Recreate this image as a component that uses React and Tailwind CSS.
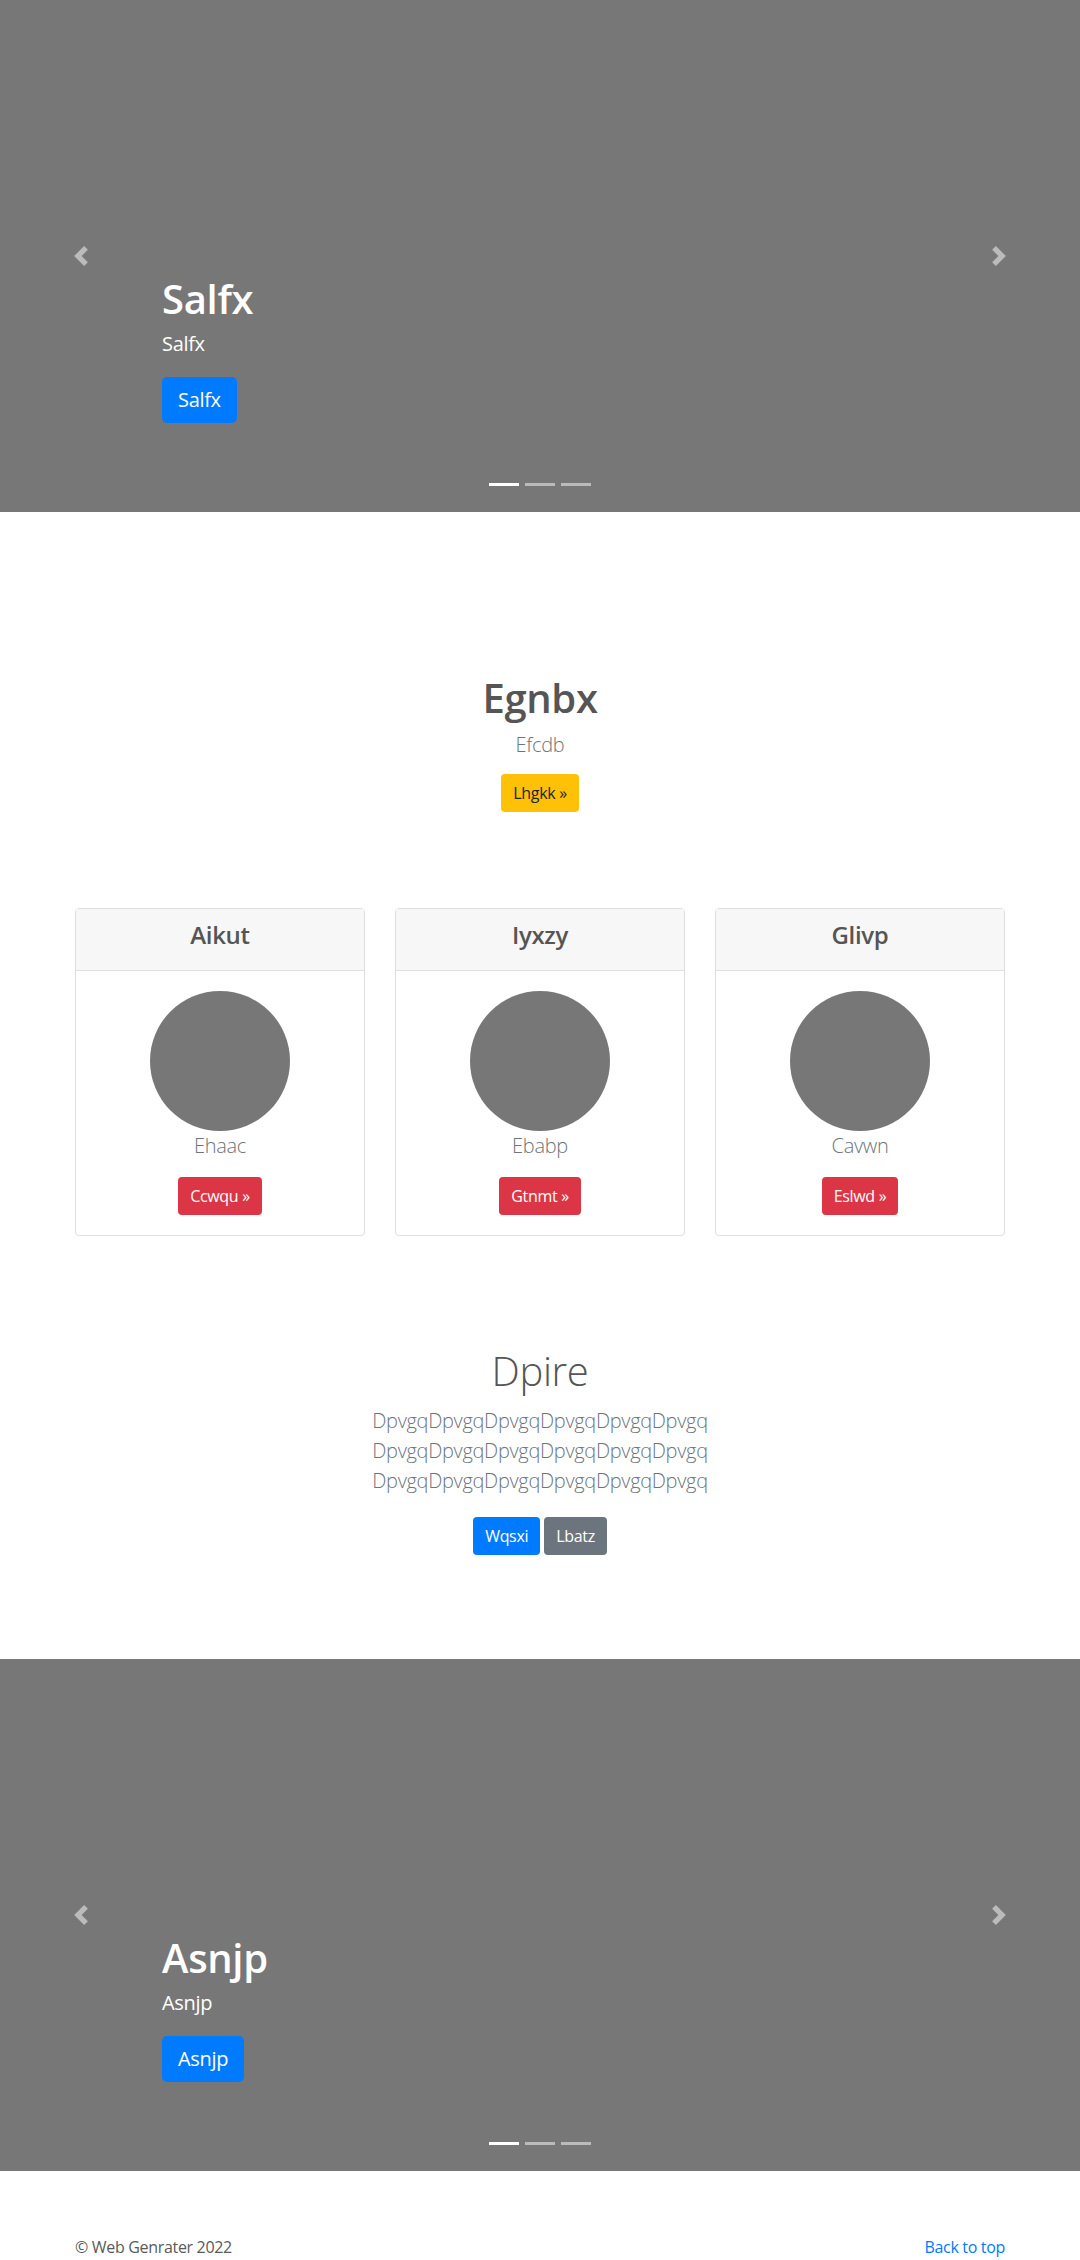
import React from 'react';

/* ── Carousel-like hero ───────────────────────────── */
function Chevron({ dir }) {
  const d = dir === 'prev'
    ? 'M5.25 0l-4 4 4 4 1.5-1.5L4.25 4l2.5-2.5L5.25 0z'
    : 'M2.75 0l-1.5 1.5L3.75 4l-2.5 2.5L2.75 8l4-4-4-4z';
  return (
    <svg viewBox="0 0 8 8" className="w-5 h-5" fill="#fff">
      <path d={d} />
    </svg>
  );
}

function Hero({ title }) {
  return (
    <div className="relative h-[512px] bg-[#777]">
      <a href="#" className="absolute left-0 top-0 bottom-0 w-[15%] flex items-center justify-center opacity-50">
        <Chevron dir="prev" />
      </a>
      <a href="#" className="absolute right-0 top-0 bottom-0 w-[15%] flex items-center justify-center opacity-50">
        <Chevron dir="next" />
      </a>

      <div className="absolute left-[15%] right-[15%] bottom-[53px] py-5 text-left text-white">
        <h1 className="text-[40px] leading-[1.2] font-semibold mb-1.5">{title}</h1>
        <p className="text-xl leading-[1.5] mb-[18px]">{title}</p>
        <p className="mb-4">
          <a href="#" className="inline-block bg-[#007bff] text-white text-xl leading-[1.5] px-4 py-2 rounded-[5px]">
            {title}
          </a>
        </p>
      </div>

      {/* indicators */}
      <div className="absolute bottom-[26px] left-0 right-0 flex justify-center gap-[6px]">
        <span className="w-[30px] h-[3px] bg-white" />
        <span className="w-[30px] h-[3px] bg-white/50" />
        <span className="w-[30px] h-[3px] bg-white/50" />
      </div>
    </div>
  );
}

/* ── Card ─────────────────────────────────────────── */
function Card({ title, text, btn }) {
  return (
    <div className="border border-[#dfdfdf] rounded-[4px] text-center bg-white">
      <div className="bg-[#f7f7f7] border-b border-[#dfdfdf] px-5 py-3">
        <h4 className="text-2xl leading-[1.2] font-semibold text-[#555] mb-2">{title}</h4>
      </div>
      <div className="p-5">
        <div className="w-[140px] h-[140px] rounded-full bg-[#777] mx-auto" />
        <p className="text-xl font-light leading-[1.5] text-[#6c757d] mb-4">{text}</p>
        <a href="#" className="inline-block bg-[#dc3545] text-white leading-[1.5] px-3 py-[7px] rounded-[4px]">
          {btn} »
        </a>
      </div>
    </div>
  );
}

const cards = [
  { title: 'Aikut', text: 'Ehaac', btn: 'Ccwqu' },
  { title: 'Iyxzy', text: 'Ebabp', btn: 'Gtnmt' },
  { title: 'Glivp', text: 'Cavwn', btn: 'Eslwd' },
];

export default function App() {
  const line = 'DpvgqDpvgqDpvgqDpvgqDpvgqDpvgq';
  return (
    <div className="bg-white text-[#5a5a5a] text-base tracking-[-0.02em] font-['Open_Sans','Noto_Sans',sans-serif]">
      <Hero title="Salfx" />

      <section className="pt-[162px] text-center">
        <h1 className="text-[40px] leading-[1.2] font-semibold text-[#555] mb-2">Egnbx</h1>
        <p className="text-xl font-light leading-[1.5] text-[#6c757d] mb-[14px]">Efcdb</p>
        <a href="#" className="inline-block bg-[#ffc107] text-[#212529] leading-[1.5] px-3 py-[7px] rounded-[4px]">
          Lhgkk »
        </a>
      </section>

      <div className="w-[930px] mx-auto mt-[96px] grid grid-cols-3 gap-[30px]">
        {cards.map(c => <Card key={c.title} {...c} />)}
      </div>

      <section className="mt-[111px] text-center">
        <h1 className="text-[40px] leading-[1.2] font-light text-[#555] mb-[11px]">Dpire</h1>
        <p className="text-xl font-light leading-[1.5] text-[#6c757d] mb-[21px]">
          {line}<br />{line}<br />{line}
        </p>
        <div className="flex justify-center gap-1">
          <a href="#" className="inline-block bg-[#007bff] text-white leading-[1.5] px-3 py-[7px] rounded-[4px]">Wqsxi</a>
          <a href="#" className="inline-block bg-[#6c757d] text-white leading-[1.5] px-3 py-[7px] rounded-[4px]">Lbatz</a>
        </div>
      </section>

      <div className="mt-[104px]">
        <Hero title="Asnjp" />
      </div>

      <footer className="w-[930px] mx-auto pt-[64px] pb-4 flex justify-between leading-[1.5]">
        <p>© Web Genrater 2022</p>
        <a href="#" className="text-[#007bff]">Back to top</a>
      </footer>
    </div>
  );
}
